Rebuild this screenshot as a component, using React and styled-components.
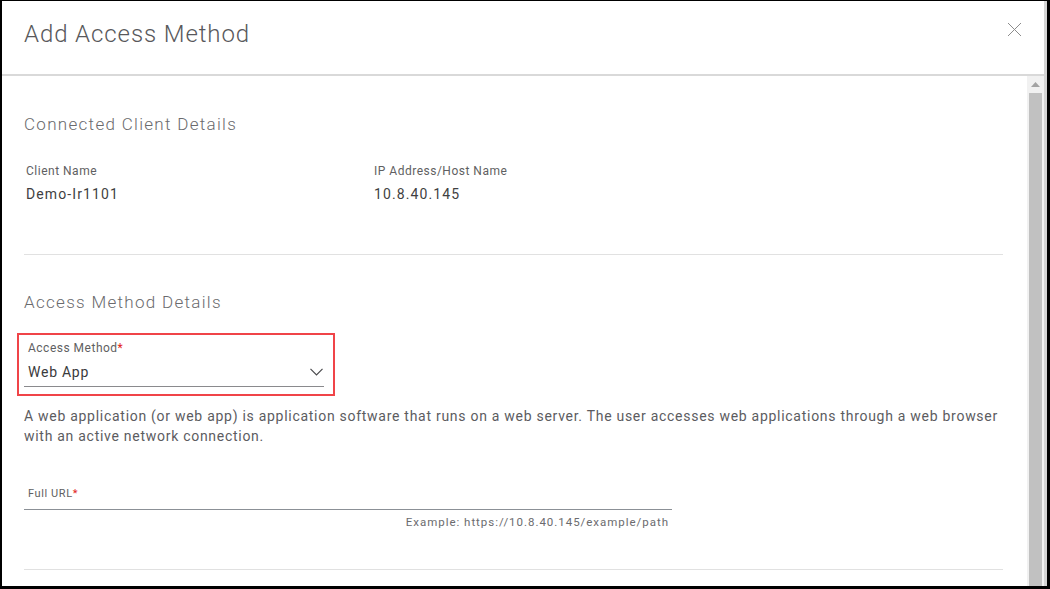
import React from 'react';
import styled, { createGlobalStyle } from 'styled-components';

const GlobalStyle = createGlobalStyle`
  html, body {
    margin: 0;
    padding: 0;
    background: #000;
    height: 100%;
    overflow: hidden;
  }
  body {
    font-family: Roboto, "Liberation Sans", Arial, sans-serif;
  }
  * {
    box-sizing: border-box;
  }
`;

const Frame = styled.div`
  margin: 1px 3px 3px 2px;
  height: 585px;
  background: #fff;
  border-right: 3px solid #d4d4d4;
  display: flex;
  flex-direction: column;
  overflow: hidden;
`;

const Header = styled.div`
  height: 75px;
  flex: none;
  display: flex;
  align-items: flex-start;
  justify-content: space-between;
  padding: 19px 22px 0 22px;
  border-bottom: 2px solid #d9d9d9;
`;

const Title = styled.h1`
  margin: 0;
  font-size: 24px;
  line-height: 28px;
  font-weight: 300;
  letter-spacing: 0.9px;
  color: #58585b;
`;

const CloseButton = styled.button`
  border: none;
  background: none;
  padding: 0;
  margin-top: 2px;
  width: 16px;
  height: 16px;
  cursor: pointer;
  color: #8c8c8c;
`;

const Body = styled.div`
  flex: 1;
  display: flex;
  min-height: 0;
`;

const Content = styled.div`
  flex: 1;
  padding: 36px 24px 0 21px;
`;

const SectionTitle = styled.h2`
  margin: ${(p) => p.$top}px 0 ${(p) => p.$gap}px 1px;
  font-size: 17px;
  line-height: 24px;
  font-weight: 300;
  letter-spacing: 1.3px;
  color: #6a6a6d;
`;

const InfoGrid = styled.div`
  display: grid;
  grid-template-columns: 348px 1fr;
  padding-left: 3px;
`;

const Label = styled.div`
  font-size: 12px;
  line-height: 14px;
  color: #5f5f62;
  letter-spacing: 0.5px;
`;

const Required = styled.span`
  color: #e2231a;
`;

const Value = styled.div`
  margin-top: 7px;
  font-size: 14px;
  line-height: 18px;
  color: #3f3f42;
  letter-spacing: 1.1px;
`;

const Divider = styled.hr`
  margin: ${(p) => p.$top}px 0 0 1px;
  border: none;
  border-top: 1px solid #e1e1e1;
`;

const Highlight = styled.div`
  margin: 0 0 0 -6px;
  width: 318px;
  height: 63px;
  border: 2px solid #f04448;
  padding: 6px 9px 0 5px;
`;

const SelectField = styled.div`
  width: 300px;
  border-bottom: 1px solid #8a8a8d;
  padding: 0 0 0 4px;
`;

const SelectRow = styled.div`
  display: flex;
  align-items: center;
  justify-content: space-between;
  height: 29px;
  margin-top: 2px;
  padding-right: 1px;
`;

const SelectValue = styled.span`
  font-size: 14px;
  color: #3a3a3c;
  letter-spacing: 0.75px;
`;

const Description = styled.p`
  margin: 10px 0 0 1px;
  font-size: 14px;
  line-height: 20px;
  letter-spacing: 0.72px;
  color: #5c5c5f;
  white-space: nowrap;
`;

const UrlField = styled.div`
  margin-top: 41px;
  width: 648px;
  margin-left: 1px;
`;

const UrlBox = styled.div`
  border-bottom: 1px solid #8b9096;
  padding: 0 0 9px 4px;
`;

const UrlLabel = styled.div`
  font-size: 11px;
  line-height: 13px;
  letter-spacing: 0.6px;
  color: #5f5f62;
`;

const Hint = styled.div`
  margin-top: 5px;
  text-align: right;
  padding-right: 3px;
  font-size: 11.5px;
  line-height: 14px;
  color: #6b6b6e;
  letter-spacing: 0.97px;
`;

const ScrollTrack = styled.div`
  width: 17px;
  flex: none;
  background: #f1f1f1;
  display: flex;
  flex-direction: column;
  align-items: center;
`;

const ScrollArrow = styled.div`
  height: 17px;
  width: 17px;
  display: flex;
  align-items: center;
  justify-content: center;
`;

const ScrollThumb = styled.div`
  flex: 1;
  width: 13px;
  background: #c1c1c1;
`;

const Chevron = () => (
  <svg width="13" height="8" viewBox="0 0 13 8" fill="none">
    <polyline points="0.5,0.8 6.5,6.8 12.5,0.8" stroke="#4a4a4d" strokeWidth="1.2" />
  </svg>
);

export default function App() {
  return (
    <>
      <GlobalStyle />
      <Frame>
        <Header>
          <Title>Add Access Method</Title>
          <CloseButton aria-label="Close">
            <svg width="15" height="15" viewBox="0 0 15 15">
              <path d="M1 1 L14 14 M14 1 L1 14" stroke="currentColor" strokeWidth="1" />
            </svg>
          </CloseButton>
        </Header>
        <Body>
          <Content>
            <SectionTitle $top={0} $gap={28}>Connected Client Details</SectionTitle>
            <InfoGrid>
              <div>
                <Label>Client Name</Label>
                <Value>Demo-Ir1101</Value>
              </div>
              <div>
                <Label>IP Address/Host Name</Label>
                <Value>10.8.40.145</Value>
              </div>
            </InfoGrid>
            <Divider $top={51} />
            <SectionTitle $top={35} $gap={19}>Access Method Details</SectionTitle>
            <Highlight>
              <SelectField>
                <Label>
                  Access Method<Required>*</Required>
                </Label>
                <SelectRow>
                  <SelectValue>Web App</SelectValue>
                  <Chevron />
                </SelectRow>
              </SelectField>
            </Highlight>
            <Description>
              A web application (or web app) is application software that runs on a web server. The user accesses web
              applications through a web browser
              <br />
              with an active network connection.
            </Description>
            <UrlField>
              <UrlBox>
                <UrlLabel>
                  Full URL<Required>*</Required>
                </UrlLabel>
              </UrlBox>
              <Hint>Example: https://10.8.40.145/example/path</Hint>
            </UrlField>
            <Divider $top={40} />
          </Content>
          <ScrollTrack>
            <ScrollArrow>
              <svg width="9" height="5" viewBox="0 0 9 5">
                <polygon points="0,5 4.5,0 9,5" fill="#a3a3a3" />
              </svg>
            </ScrollArrow>
            <ScrollThumb />
          </ScrollTrack>
        </Body>
      </Frame>
    </>
  );
}
